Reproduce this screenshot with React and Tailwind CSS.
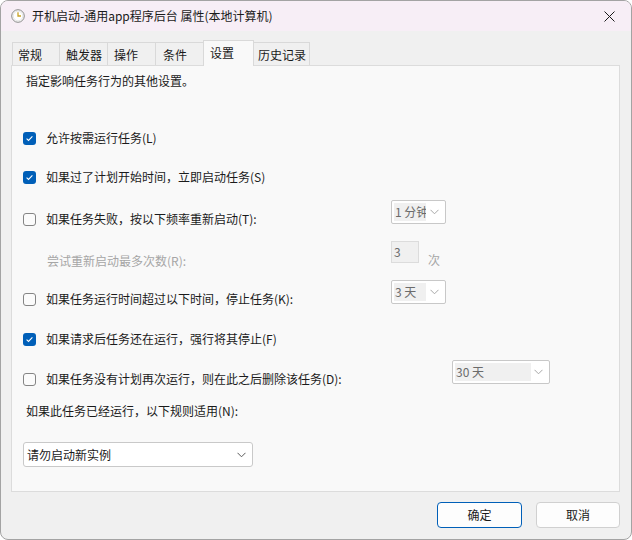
import React from 'react'

const font = { fontFamily: '"Noto Sans CJK SC", "Noto Sans", sans-serif' }

const Chevron = ({ color = '#a8a8a8' }) => (
    <svg width="9" height="6" viewBox="0 0 9 6" fill="none">
        <path d="M0.5 0.8 L4.5 4.8 L8.5 0.8" stroke={color} strokeWidth="1" />
    </svg>
)

const Checkbox = ({ checked }) => (
    checked ? (
        <div className="w-[13px] h-[13px] rounded-[3px] bg-[#005fb8] flex items-center justify-center shrink-0">
            <svg width="13" height="13" viewBox="0 0 13 13" fill="none">
                <path d="M3.6 6.7 L5.5 8.5 L9.4 4.4" stroke="white" strokeWidth="1.1" />
            </svg>
        </div>
    ) : (
        <div className="w-[13px] h-[13px] rounded-[3px] border border-[#858585] bg-[#fbfbfb] shrink-0"></div>
    )
)

const CheckRow = ({ checked, label }) => (
    <div className="flex items-center gap-[10px] h-4 pl-[11px]">
        <Checkbox checked={checked} />
        <span className="text-[12px] leading-4 text-[#1b1b1b] whitespace-nowrap">{label}</span>
    </div>
)

const DisabledDrop = ({ text, width, inner }) => (
    <div className={`${width} h-[24px] border border-[#c8c8c8] rounded-[2px] bg-white flex items-center pl-[2px] pr-[6px] shrink-0`}>
        <div className={`${inner} h-[18px] bg-[#f0f0f0] overflow-hidden whitespace-nowrap text-[12px] leading-[18px] text-[#6b6b6b] pl-[1px]`}>
            {text}
        </div>
        <div className="ml-auto flex items-center">
            <Chevron />
        </div>
    </div>
)

const tabs = [
    { name: '常规', w: 'w-[48px]', pl: 'pl-[5px]' },
    { name: '触发器', w: 'w-[49px]', pl: 'pl-[6px]' },
    { name: '操作', w: 'w-[49px]', pl: 'pl-[6px]' },
    { name: '条件', w: 'w-[49px]', pl: 'pl-[7px]' },
    { name: '设置', w: 'w-[51px]', pl: 'pl-[6px]', active: true },
    { name: '历史记录', w: 'w-[57px]', pl: 'pl-[4px]' },
]

const App = () => {
    return (
        <div style={font} className="w-[632px] h-[540px] bg-[#f0f0f0] border border-[#a3a3a3] rounded-[8px] overflow-hidden flex flex-col">
            {/* title bar */}
            <div className="h-[30px] bg-[#f7eef6] flex items-center shrink-0">
                <div className="w-[31px] flex justify-center pl-[2px]">
                    <svg width="14" height="14" viewBox="0 0 14 14">
                        <circle cx="7" cy="7" r="6.3" fill="#fafafa" stroke="#8a8a8a" strokeWidth="1" />
                        <circle cx="7" cy="7" r="4.8" fill="#ffffff" stroke="#d6d6d6" strokeWidth="0.6" />
                        <path d="M7 3.2 L7 7 L10 7" stroke="#c9a227" strokeWidth="1.3" fill="none" />
                    </svg>
                </div>
                <span className="text-[12px] leading-4 text-[#1a1a1a]">开机启动-通用app程序后台 属性(本地计算机)</span>
                <div className="ml-auto w-[46px] h-[30px] flex items-center justify-center mr-[-1px]">
                    <svg width="11" height="11" viewBox="0 0 11 11">
                        <path d="M0.5 0.5 L10.5 10.5 M10.5 0.5 L0.5 10.5" stroke="#1a1a1a" strokeWidth="1" />
                    </svg>
                </div>
            </div>

            {/* tabs */}
            <div className="flex items-end h-[24px] mt-[10px] ml-[11px] relative z-10">
                {tabs.map((t, i) => (
                    t.active ? (
                        <div key={t.name} className={`${t.w} ${t.pl} ${i > 0 ? '-ml-px' : ''} h-[26px] mb-[-1px] bg-[#f9f9f9] border-t border-l border-r border-[#d9d9d9] text-[12px] leading-4 text-[#1a1a1a] pt-[4px] relative`}>
                            {t.name}
                        </div>
                    ) : (
                        <div key={t.name} className={`${t.w} ${t.pl} ${i > 0 ? '-ml-px' : ''} h-[23px] bg-[#f0f0f0] border-t border-l border-r border-[#d9d9d9] text-[12px] leading-4 text-[#1a1a1a] pt-[4px]`}>
                            {t.name}
                        </div>
                    )
                ))}
            </div>

            {/* panel */}
            <div className="ml-[10px] mr-[11px] h-[427px] bg-[#f9f9f9] border border-[#dcdcdc] flex flex-col shrink-0">
                <div className="pl-[14px] pt-[7px] text-[12px] leading-4 text-[#1a1a1a]">指定影响任务行为的其他设置。</div>

                <div className="mt-[41px]">
                    <CheckRow checked label="允许按需运行任务(L)" />
                </div>
                <div className="mt-[23px]">
                    <CheckRow checked label="如果过了计划开始时间，立即启动任务(S)" />
                </div>

                <div className="mt-[15px] flex items-start h-[28px]">
                    <div className="w-[379px] pt-[11px]">
                        <CheckRow label="如果任务失败，按以下频率重新启动(T):" />
                    </div>
                    <DisabledDrop text="1 分钟" width="w-[55px]" inner="w-[32px]" />
                </div>

                <div className="mt-[13px] flex items-start h-[28px]">
                    <div className="w-[379px] pt-[12px] pl-[35px] text-[12px] leading-4 text-[#a6a6a6]">尝试重新启动最多次数(R):</div>
                    <div className="w-[28px] h-[22px] border border-[#dcdcdc] bg-[#f0f0f0] text-[12px] leading-[20px] text-[#6b6b6b] pl-[2px]">3</div>
                    <div className="ml-[9px] pt-[11px] text-[12px] leading-4 text-[#a6a6a6]">次</div>
                </div>

                <div className="mt-[11px] flex items-start h-[28px]">
                    <div className="w-[379px] pt-[11px]">
                        <CheckRow label="如果任务运行时间超过以下时间，停止任务(K):" />
                    </div>
                    <DisabledDrop text="3 天" width="w-[55px]" inner="w-[32px]" />
                </div>

                <div className="mt-[23px]">
                    <CheckRow checked label="如果请求后任务还在运行，强行将其停止(F)" />
                </div>

                <div className="mt-[13px] flex items-start h-[28px]">
                    <div className="w-[440px] pt-[11px]">
                        <CheckRow label="如果任务没有计划再次运行，则在此之后删除该任务(D):" />
                    </div>
                    <DisabledDrop text="30 天" width="w-[98px]" inner="w-[76px]" />
                </div>

                <div className="mt-[15px] pl-[14px] text-[12px] leading-4 text-[#1a1a1a]">如果此任务已经运行，以下规则适用(N):</div>

                <div className="mt-[23px] ml-[11px] w-[230px] h-[25px] bg-white border border-[#c9c9c9] rounded-[3px] flex items-center pl-[3px] pr-[6px]">
                    <span className="text-[12px] leading-4 text-[#1a1a1a]">请勿启动新实例</span>
                    <div className="ml-auto flex items-center">
                        <Chevron color="#5a5a5a" />
                    </div>
                </div>
            </div>

            {/* buttons */}
            <div className="flex justify-end gap-[14px] mt-[10px] mr-[11px]">
                <button className="w-[85px] h-[26px] bg-[#fdfdfd] border border-[#005fb8] rounded-[4px] text-[12px] leading-4 text-[#1a1a1a]">确定</button>
                <button className="w-[84px] h-[26px] bg-[#fdfdfd] border border-[#d0d0d0] rounded-[4px] text-[12px] leading-4 text-[#1a1a1a]">取消</button>
            </div>
        </div>
    )
}

export default App
